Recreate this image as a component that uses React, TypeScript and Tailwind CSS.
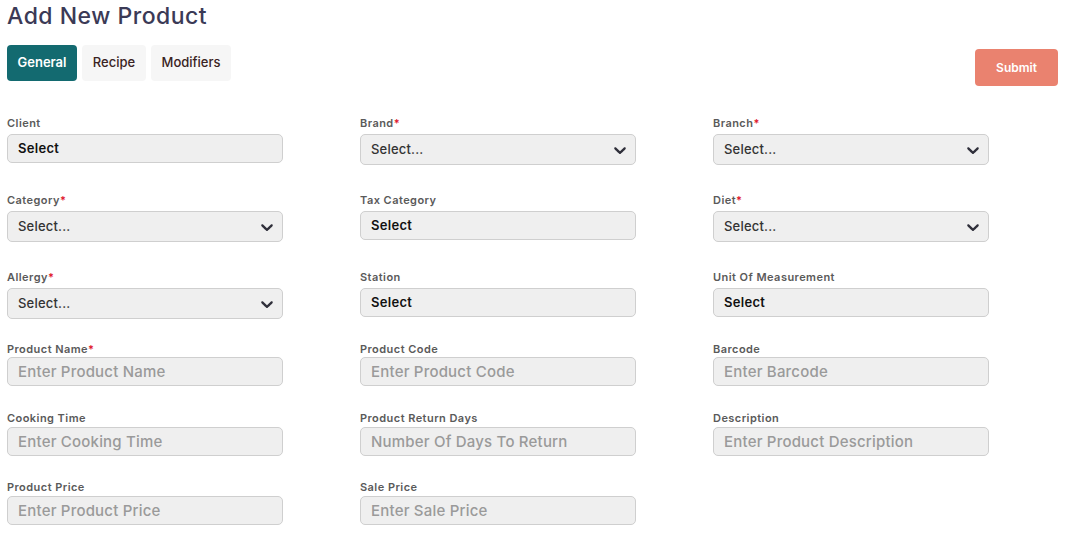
import React from 'react';

type Field = {
  label: string;
  required?: boolean;
  kind: 'plain' | 'select' | 'input';
  text: string;
};

const rows: { fields: (Field | null)[]; rowClass: string; labelGap: string }[] = [
  {
    rowClass: 'mt-[30px]',
    labelGap: 'mt-[4px]',
    fields: [
      { label: 'Client', kind: 'plain', text: 'Select' },
      { label: 'Brand', required: true, kind: 'select', text: 'Select...' },
      { label: 'Branch', required: true, kind: 'select', text: 'Select...' },
    ],
  },
  {
    rowClass: 'mt-[28px]',
    labelGap: 'mt-[4px]',
    fields: [
      { label: 'Category', required: true, kind: 'select', text: 'Select...' },
      { label: 'Tax Category', kind: 'plain', text: 'Select' },
      { label: 'Diet', required: true, kind: 'select', text: 'Select...' },
    ],
  },
  {
    rowClass: 'mt-[28px]',
    labelGap: 'mt-[4px]',
    fields: [
      { label: 'Allergy', required: true, kind: 'select', text: 'Select...' },
      { label: 'Station', kind: 'plain', text: 'Select' },
      { label: 'Unit Of Measurement', kind: 'plain', text: 'Select' },
    ],
  },
  {
    rowClass: 'mt-[23px]',
    labelGap: 'mt-[1px]',
    fields: [
      { label: 'Product Name', required: true, kind: 'input', text: 'Enter Product Name' },
      { label: 'Product Code', kind: 'input', text: 'Enter Product Code' },
      { label: 'Barcode', kind: 'input', text: 'Enter Barcode' },
    ],
  },
  {
    rowClass: 'mt-[25px]',
    labelGap: 'mt-[2px]',
    fields: [
      { label: 'Cooking Time', kind: 'input', text: 'Enter Cooking Time' },
      { label: 'Product Return Days', kind: 'input', text: 'Number Of Days To Return' },
      { label: 'Description', kind: 'input', text: 'Enter Product Description' },
    ],
  },
  {
    rowClass: 'mt-[24px]',
    labelGap: 'mt-[2px]',
    fields: [
      { label: 'Product Price', kind: 'input', text: 'Enter Product Price' },
      { label: 'Sale Price', kind: 'input', text: 'Enter Sale Price' },
      null,
    ],
  },
];

const Chevron = () => (
  <svg viewBox="0 0 20 20" width="20" height="20" className="fill-[#2f2f3a]">
    <path d="M4.516 7.548c0.436-0.446 1.043-0.481 1.576 0l3.908 3.747 3.908-3.747c0.533-0.481 1.141-0.446 1.574 0 0.436 0.445 0.408 1.197 0 1.615-0.406 0.418-4.695 4.502-4.695 4.502-0.217 0.223-0.502 0.335-0.787 0.335s-0.57-0.112-0.789-0.335c0 0-4.287-4.084-4.695-4.502s-0.436-1.17 0-1.615z" />
  </svg>
);

const FieldBox: React.FC<{ field: Field; gap: string }> = ({ field, gap }) => (
  <div className="flex flex-col w-[276px]">
    <label className="text-[11px] leading-[14px] h-[14px] font-semibold tracking-[0.45px] text-[#5a5a5a]">
      {field.label}
      {field.required && <span className="text-[#e0182d]">*</span>}
    </label>
    {field.kind === 'plain' && (
      <div className={`${gap} h-[29px] rounded-[5px] border border-[#cfcfcf] bg-[#efefef] flex items-center px-[10px] text-[13px] font-semibold tracking-[0.3px] text-[#111]`}>
        {field.text}
      </div>
    )}
    {field.kind === 'select' && (
      <div className={`${gap} h-[31px] rounded-[5px] border border-[#cfcfcf] bg-[#efefef] flex items-center justify-between pl-[10px] pr-[5px] text-[13px] font-medium tracking-[0.2px] text-[#333]`}>
        <span>{field.text}</span>
        <Chevron />
      </div>
    )}
    {field.kind === 'input' && (
      <div className={`${gap} h-[29px] rounded-[5px] border border-[#cfcfcf] bg-[#efefef] flex items-center px-[10px] pt-[1px] text-[15px] font-medium tracking-[0.2px] text-[#9a9a9a]`}>
        {field.text}
      </div>
    )}
  </div>
);

export default function App() {
  return (
    <div className="w-[1079px] h-[542px] bg-white overflow-hidden px-[7px] pt-[3px] font-['Inter','Noto_Sans',sans-serif]">
      <h1 className="text-[23px] leading-[26px] font-medium text-[#3b3a56] tracking-[0.5px]">Add New Product</h1>
      <div className="flex justify-between items-start mt-[16px] pr-[14px]">
        <div className="flex gap-[5px]">
          <button className="h-[36px] w-[70px] rounded-[4px] bg-[#136a70] text-white text-[13px] font-semibold">General</button>
          <button className="h-[36px] w-[64px] rounded-[4px] bg-[#f6f6f6] text-[#3a2323] text-[13px] font-medium">Recipe</button>
          <button className="h-[36px] w-[80px] rounded-[4px] bg-[#f6f6f6] text-[#3a2323] text-[13px] font-medium">Modifiers</button>
        </div>
        <button className="mt-[4px] h-[37px] w-[83px] rounded-[4px] bg-[#ea826f] text-white text-[12px] font-semibold">Submit</button>
      </div>
      {rows.map((row, i) => (
        <div key={i} className={`${row.rowClass} flex gap-[77px]`}>
          {row.fields.map((f, j) =>
            f ? <FieldBox key={j} field={f} gap={row.labelGap} /> : <div key={j} className="w-[276px]" />
          )}
        </div>
      ))}
    </div>
  );
}
